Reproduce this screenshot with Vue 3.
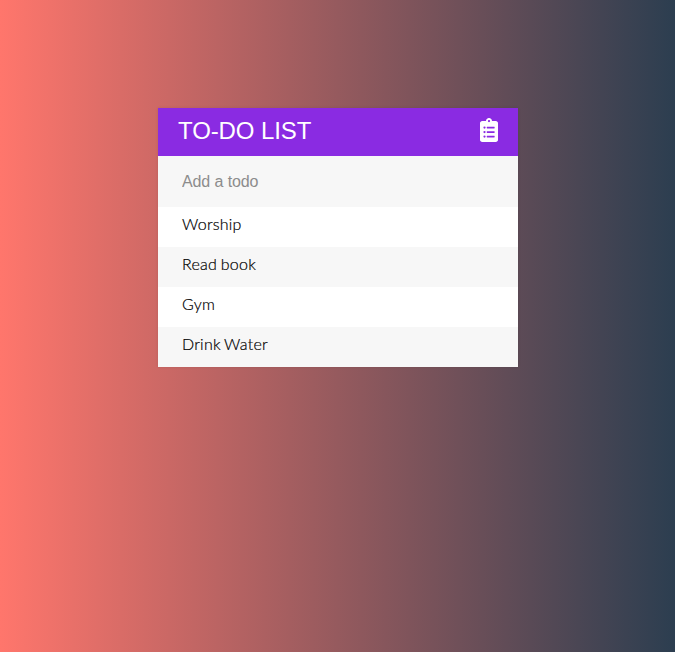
<script setup>
import { ref } from 'vue'

const draft = ref('')
const todos = ref(['Worship', 'Read book', 'Gym', 'Drink Water'])

function addTodo() {
  const text = draft.value.trim()
  if (!text) return
  todos.value.push(text)
  draft.value = ''
}
</script>

<template>
  <main class="page">
    <section class="card">
      <header class="head">
        <h1>TO-DO LIST</h1>
        <svg class="icon" viewBox="0 0 384 512" aria-hidden="true">
          <path
            fill="currentColor"
            fill-rule="evenodd"
            d="M336 64h-80c0-35.300-28.700-64-64-64s-64 28.700-64 64H48C21.500 64 0 85.500 0 112v352c0 26.500 21.500 48 48 48h288c26.500 0 48-21.500 48-48V112c0-26.500-21.500-48-48-48zM192 40a24 24 0 1 1 0 48 24 24 0 0 1 0-48zM96 180a24 24 0 1 0 0 48 24 24 0 0 0 0-48zM96 276a24 24 0 1 0 0 48 24 24 0 0 0 0-48zM96 372a24 24 0 1 0 0 48 24 24 0 0 0 0-48zM152 186h152a8 8 0 0 1 8 8v20a8 8 0 0 1-8 8H152a8 8 0 0 1-8-8v-20a8 8 0 0 1 8-8zM152 282h152a8 8 0 0 1 8 8v20a8 8 0 0 1-8 8H152a8 8 0 0 1-8-8v-20a8 8 0 0 1 8-8zM152 378h152a8 8 0 0 1 8 8v20a8 8 0 0 1-8 8H152a8 8 0 0 1-8-8v-20a8 8 0 0 1 8-8z"
          />
        </svg>
      </header>
      <input v-model="draft" class="field" type="text" placeholder="Add a todo" @keyup.enter="addTodo" />
      <ul class="list">
        <li v-for="todo in todos" :key="todo">{{ todo }}</li>
      </ul>
    </section>
  </main>
</template>

<style>
body {
  margin: 0;
}
</style>

<style scoped>
.page {
  box-sizing: border-box;
  min-height: 100vh;
  padding-top: 108px;
  background: linear-gradient(to right, #ff766c, #2c3e50);
}

.card {
  width: 360px;
  margin: 0 auto 0 158px;
  background: #f7f7f7;
  box-shadow: 0 0 3px rgba(0, 0, 0, 0.1);
}

.head {
  display: flex;
  align-items: center;
  justify-content: space-between;
  box-sizing: border-box;
  height: 48px;
  padding: 0 20px;
  background: #8a2be2;
  color: #fff;
}

h1 {
  margin: 0;
  padding-bottom: 2px;
  font: 400 24px/28px 'Liberation Sans', Arial, sans-serif;
  letter-spacing: -0.1px;
}

.icon {
  width: 18px;
  height: 24px;
  margin-bottom: 4px;
}

.field {
  display: block;
  box-sizing: border-box;
  width: 100%;
  height: 51px;
  padding: 0 24px;
  border: 0;
  outline: 0;
  background: #f7f7f7;
  color: #222;
  font: 400 16px 'Liberation Sans', Arial, sans-serif;
  letter-spacing: -0.1px;
}

.field::placeholder {
  color: #8c8c8c;
  opacity: 1;
}

.list {
  margin: 0;
  padding: 0;
  list-style: none;
}

li {
  box-sizing: border-box;
  height: 40px;
  padding: 0 24px;
  background: #fff;
  color: #000;
  font: 300 16px/34px Lato, sans-serif;
  letter-spacing: 0.25px;
  word-spacing: -1px;
  -webkit-text-stroke: 0.2px #000;
}

li:nth-child(even) {
  background: #f7f7f7;
}
</style>
